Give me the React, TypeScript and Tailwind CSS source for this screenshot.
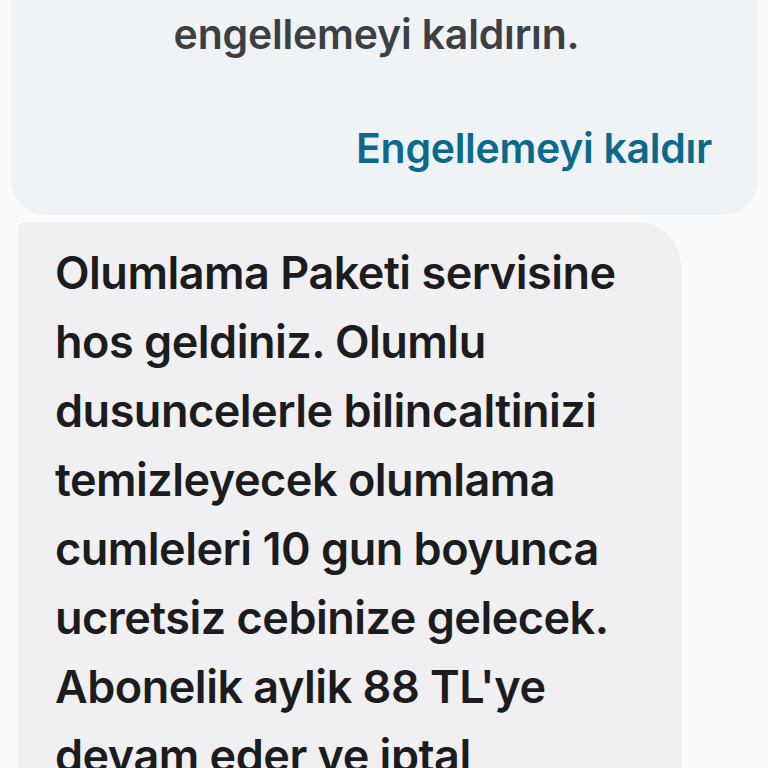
import React from 'react';

const lines = [
  'Olumlama Paketi servisine',
  'hos geldiniz. Olumlu',
  'dusuncelerle bilincaltinizi',
  'temizleyecek olumlama',
  'cumleleri 10 gun boyunca',
  'ucretsiz cebinize gelecek.',
  "Abonelik aylik 88 TL'ye",
  'devam eder ve iptal',
];

export default function App() {
  return (
    <div className="w-[768px] h-[768px] overflow-hidden bg-[#f9fafc] font-['Inter','Noto_Sans',sans-serif]">
      <div className="flex flex-col gap-[7px]">
        <div className="ml-[11px] mr-[10px] h-[215px] bg-[#f0f3f6] rounded-b-[34px] flex flex-col">
          <p className="mt-[9px] text-center text-[41px] leading-[50px] font-semibold text-[#3c4043] pr-[16px] tracking-[-0.2px]">
            engellemeyi kaldırın.
          </p>
          <div className="mt-[64px] flex justify-end pr-[46px]">
            <span className="text-[41px] leading-[50px] font-semibold text-[#0b6a8b] tracking-[-0.3px]">Engellemeyi kaldır</span>
          </div>
        </div>
        <div className="ml-[18px] w-[663px] h-[600px] bg-[#f0f0f2] rounded-tl-[8px] rounded-tr-[44px] pl-[37px] pr-[10px] pt-[16px]">
          <p className="text-[45px] leading-[69px] font-semibold text-[#1c1c1e] tracking-[-0.5px]">
            {lines.map((l, i) => (
              <React.Fragment key={i}>
                {l}
                {i < lines.length - 1 && <br />}
              </React.Fragment>
            ))}
          </p>
        </div>
      </div>
    </div>
  );
}
